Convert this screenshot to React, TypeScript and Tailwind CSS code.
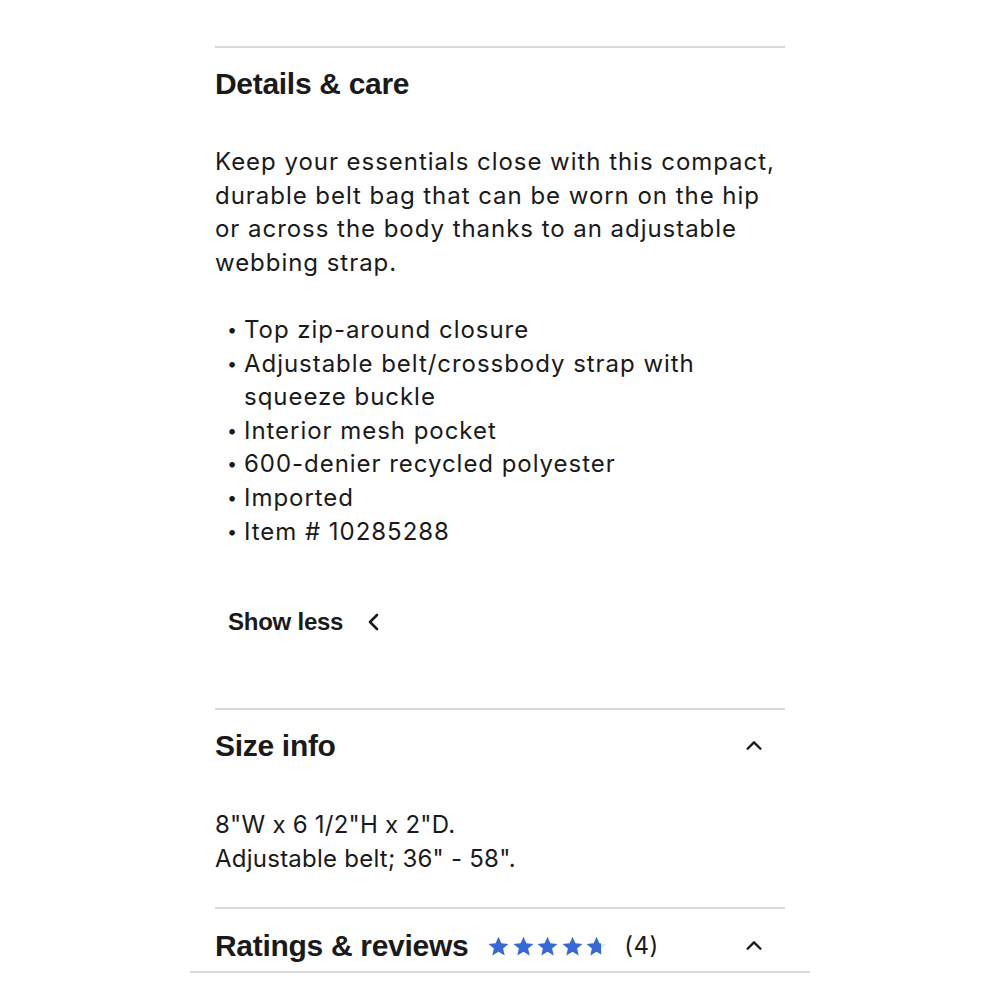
import React from "react";

const body = { fontFamily: "Inter, 'Open Sans', sans-serif" };
const head = { fontFamily: "'Liberation Sans', Arial, sans-serif" };

function ChevronUp() {
  return (
    <svg width="22" height="22" viewBox="0 0 24 24" fill="none" stroke="#1a1a1a" strokeWidth="2.6" strokeLinecap="round" strokeLinejoin="round">
      <path d="M5 15l7-7 7 7" />
    </svg>
  );
}

function Star({ half, id }: { half?: boolean; id: string }) {
  return (
    <svg width="23" height="23" viewBox="0 0 24 24">
      {half && (
        <defs>
          <linearGradient id={id}>
            <stop offset="75%" stopColor="#3769d6" />
            <stop offset="75%" stopColor="#dfe6f5" />
          </linearGradient>
        </defs>
      )}
      <path
        d="M12 1.8l3 6.9 7.4.6-5.6 4.9 1.7 7.3L12 17.6l-6.5 3.9 1.7-7.3L1.6 9.3 9 8.7z"
        fill={half ? `url(#${id})` : "#3769d6"}
      />
    </svg>
  );
}

export default function App() {
  const bullets = [
    "Top zip-around closure",
    "Adjustable belt/crossbody strap with squeeze buckle",
    "Interior mesh pocket",
    "600-denier recycled polyester",
    "Imported",
    "Item # 10285288",
  ];
  return (
    <div className="w-[1000px] h-[1000px] bg-white overflow-hidden text-[#1a1a1a]">
      <div className="w-[620px] mx-auto pt-[46px]">
        <div className="mx-[25px] border-t-2 border-[#d9d9d9]">
          <h2 style={head} className="mt-[19px] text-[30px] font-bold tracking-[-0.01em] leading-[34px]">
            Details &amp; care
          </h2>
          <p style={body} className="mt-[44px] text-[24px] leading-[33.6px] tracking-[0.04em]">
            Keep your essentials close with this compact, durable belt bag that can be worn on the hip or across the body thanks to an adjustable webbing strap.
          </p>
          <ul style={body} className="mt-[33.6px] text-[24px] leading-[33.6px] tracking-[0.04em] pl-[12px] pr-[60px]">
            {bullets.map((b) => (
              <li key={b} className="flex">
                <span className="w-[17px] shrink-0 text-[18px]">•</span>
                <span>{b}</span>
              </li>
            ))}
          </ul>
          <div className="mt-[56px] ml-[13px] flex items-center gap-[22px]">
            <span style={head} className="text-[24px] font-bold tracking-[-0.01em]">Show less</span>
            <svg width="18" height="22" viewBox="0 0 18 22" fill="none" stroke="#1a1a1a" strokeWidth="2.6" strokeLinecap="round" strokeLinejoin="round">
              <path d="M12 4l-7 7 7 7" />
            </svg>
          </div>
        </div>
        <div className="mx-[25px] mt-[68px] border-t-2 border-[#d9d9d9]">
          <div className="flex items-center justify-between mt-[19px] pr-[20px]">
            <h2 style={head} className="text-[30px] font-bold tracking-[-0.01em] leading-[34px]">Size info</h2>
            <ChevronUp />
          </div>
          <div style={body} className="mt-[45px] text-[24px] leading-[33.6px] tracking-[0.01em]">
            <div>8"W x 6 1/2"H x 2"D.</div>
            <div>Adjustable belt; 36" - 58".</div>
          </div>
        </div>
        <div className="mx-[25px] mt-[32px] border-t-2 border-[#d9d9d9]">
          <div className="flex items-center mt-[19px] pr-[20px]">
            <h2 style={head} className="text-[30px] font-bold tracking-[-0.01em] leading-[34px]">Ratings &amp; reviews</h2>
            <div className="flex items-center ml-[19px] gap-[1.5px]">
              <Star id="s1" /><Star id="s2" /><Star id="s3" /><Star id="s4" /><Star id="s5" half />
            </div>
            <span style={body} className="ml-[16px] text-[24px] tracking-[0.02em]">(4)</span>
            <div className="ml-auto"><ChevronUp /></div>
          </div>
        </div>
        <div className="mt-[7px] border-t-2 border-[#d9d9d9]" />
      </div>
    </div>
  );
}
